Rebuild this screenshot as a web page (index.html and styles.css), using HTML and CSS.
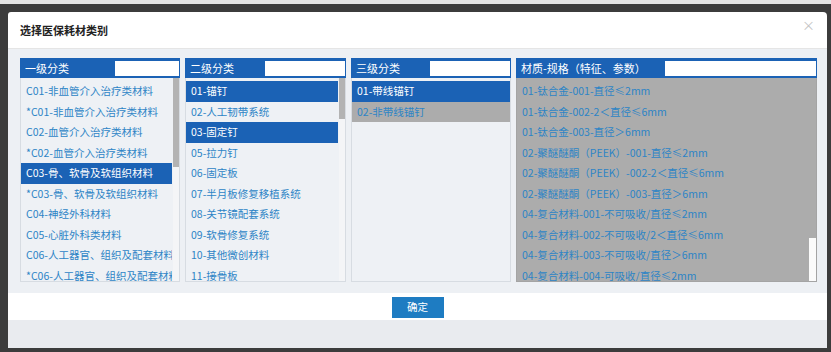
FILE: index.html
```html
<!DOCTYPE html>
<html lang="zh-CN">
<head>
    <meta charset="UTF-8">
    <meta name="viewport" content="width=device-width, initial-scale=1.0">
    <title>选择医保耗材类别</title>
    <link rel="stylesheet" href="styles.css">
</head>
<body>
    <div class="topbar"></div>
    <div class="backdrop">
        <div class="modal">
            <div class="modal-header">
                <h3 class="modal-title">选择医保耗材类别</h3>
                <span class="close">×</span>
            </div>

            <div class="modal-body">
                <!-- 一级分类 -->
                <div class="col">
                    <div class="col-head">
                        <span>一级分类</span>
                        <input type="text" class="col-search search-sm">
                    </div>
                    <div class="col-list">
                        <ul class="items">
                            <li>C01-非血管介入治疗类材料</li>
                            <li>*C01-非血管介入治疗类材料</li>
                            <li>C02-血管介入治疗类材料</li>
                            <li>*C02-血管介入治疗类材料</li>
                            <li class="active">C03-骨、软骨及软组织材料</li>
                            <li>*C03-骨、软骨及软组织材料</li>
                            <li>C04-神经外科材料</li>
                            <li>C05-心脏外科类材料</li>
                            <li>C06-人工器官、组织及配套材料</li>
                            <li>*C06-人工器官、组织及配套材料</li>
                        </ul>
                        <div class="scroll"><div class="thumb thumb-1"></div></div>
                    </div>
                </div>

                <!-- 二级分类 -->
                <div class="col">
                    <div class="col-head">
                        <span>二级分类</span>
                        <input type="text" class="col-search">
                    </div>
                    <div class="col-list">
                        <ul class="items">
                            <li class="active">01-锚钉</li>
                            <li>02-人工韧带系统</li>
                            <li class="active">03-固定钉</li>
                            <li>05-拉力钉</li>
                            <li>06-固定板</li>
                            <li>07-半月板修复移植系统</li>
                            <li>08-关节镜配套系统</li>
                            <li>09-软骨修复系统</li>
                            <li>10-其他微创材料</li>
                            <li>11-接骨板</li>
                        </ul>
                        <div class="scroll"><div class="thumb thumb-2"></div></div>
                    </div>
                </div>

                <!-- 三级分类 -->
                <div class="col">
                    <div class="col-head">
                        <span>三级分类</span>
                        <input type="text" class="col-search">
                    </div>
                    <div class="col-list">
                        <ul class="items">
                            <li class="active">01-带线锚钉</li>
                            <li class="picked">02-非带线锚钉</li>
                        </ul>
                    </div>
                </div>

                <!-- 材质-规格 -->
                <div class="col">
                    <div class="col-head">
                        <span>材质-规格（特征、参数）</span>
                        <input type="text" class="col-search search-lg">
                    </div>
                    <div class="col-list list-grey">
                        <ul class="items">
                            <li>01-钛合金-001-直径≤2mm</li>
                            <li>01-钛合金-002-2＜直径≤6mm</li>
                            <li>01-钛合金-003-直径＞6mm</li>
                            <li>02-聚醚醚酮（PEEK）-001-直径≤2mm</li>
                            <li>02-聚醚醚酮（PEEK）-002-2＜直径≤6mm</li>
                            <li>02-聚醚醚酮（PEEK）-003-直径＞6mm</li>
                            <li>04-复合材料-001-不可吸收/直径≤2mm</li>
                            <li>04-复合材料-002-不可吸收/2＜直径≤6mm</li>
                            <li>04-复合材料-003-不可吸收/直径＞6mm</li>
                            <li>04-复合材料-004-可吸收/直径≤2mm</li>
                        </ul>
                        <div class="scroll scroll-light"><div class="thumb thumb-4"></div></div>
                    </div>
                </div>
            </div>

            <div class="modal-footer">
                <button type="button" class="btn-ok">确定</button>
            </div>
            <div class="modal-bottom"></div>
        </div>
    </div>
</body>
</html>
```

FILE: styles.css
```css
/* Basic reset */
* {
    box-sizing: border-box;
    margin: 0;
    padding: 0;
}

body {
    width: 831px;
    height: 352px;
    overflow: hidden;
    background-color: #3c3c3c;
    font-family: "Noto Sans CJK SC", "Liberation Sans", sans-serif;
}

.topbar {
    height: 4px;
    background-color: #e4e4e4;
}

.backdrop {
    padding: 8px 4px 4px 8px;
    background-color: #3c3c3c;
}

.modal {
    width: 819px;
    background-color: #fff;
    border-radius: 3px 4px 0 0;
    overflow: hidden;
}

/* header */
.modal-header {
    height: 37px;
    display: flex;
    align-items: center;
    justify-content: space-between;
    padding: 0 12px;
    border-bottom: 1px solid #e5e5e5;
}

.modal-title {
    font-size: 11px;
    font-weight: bold;
    color: #222;
    line-height: 1;
}

.close {
    align-self: flex-start;
    margin-top: 6px;
    font-size: 13px;
    color: #c4c4c4;
    line-height: 1;
}

/* columns */
.modal-body {
    height: 244px;
    display: grid;
    grid-template-columns: 160px 161px 160px 301px;
    gap: 5px;
    padding: 9px 10px 0 12px;
    background-color: #edf0f4;
}

.col {
    display: flex;
    flex-direction: column;
}

.col-head {
    height: 20px;
    display: flex;
    align-items: center;
    justify-content: space-between;
    padding: 0 1px 0 5px;
    background-color: #1b62b5;
    color: #fff;
    font-size: 11px;
    line-height: 1;
}

.col-search {
    width: 80px;
    height: 15px;
    border: none;
    background-color: #fff;
}

.search-sm {
    width: 64px;
}

.search-lg {
    width: 151px;
}

.col-list {
    height: 204px;
    display: flex;
    border: 1px solid #d7dce2;
    border-top: none;
    background-color: #eef1f5;
    overflow: hidden;
}

.list-grey {
    background-color: #acacac;
    border-color: #a4a4a4;
}

.items {
    flex: 1;
    list-style: none;
    padding-top: 3px;
    overflow: hidden;
}

.items li {
    height: 20.5px;
    line-height: 20.5px;
    padding-left: 5px;
    font-size: 10.5px;
    color: #2d84c6;
    white-space: nowrap;
    overflow: hidden;
}

.items li.active {
    background-color: #1b62b5;
    color: #fff;
}

.items li.picked {
    background-color: #acacac;
}

/* fake scrollbars */
.scroll {
    width: 6px;
    margin-left: 1px;
    background-color: #f4f5f7;
}

.scroll-light {
    width: 7px;
    margin-left: 0;
    background-color: #fbfbfb;
}

.thumb {
    background-color: #b3b3b3;
}

.thumb-1 {
    height: 89px;
}

.thumb-2 {
    height: 41px;
}

.thumb-4 {
    height: 160px;
    background-color: #acacac;
}

/* footer */
.modal-footer {
    height: 27px;
    display: flex;
    justify-content: center;
    align-items: flex-start;
    padding-top: 4px;
}

.btn-ok {
    width: 52px;
    height: 21px;
    border: none;
    background-color: #1e7cc2;
    color: #fff;
    font-family: "Noto Sans CJK SC", sans-serif;
    font-size: 10.5px;
    line-height: 1;
}

.modal-bottom {
    height: 28px;
    background-color: #e9ebef;
}
```
